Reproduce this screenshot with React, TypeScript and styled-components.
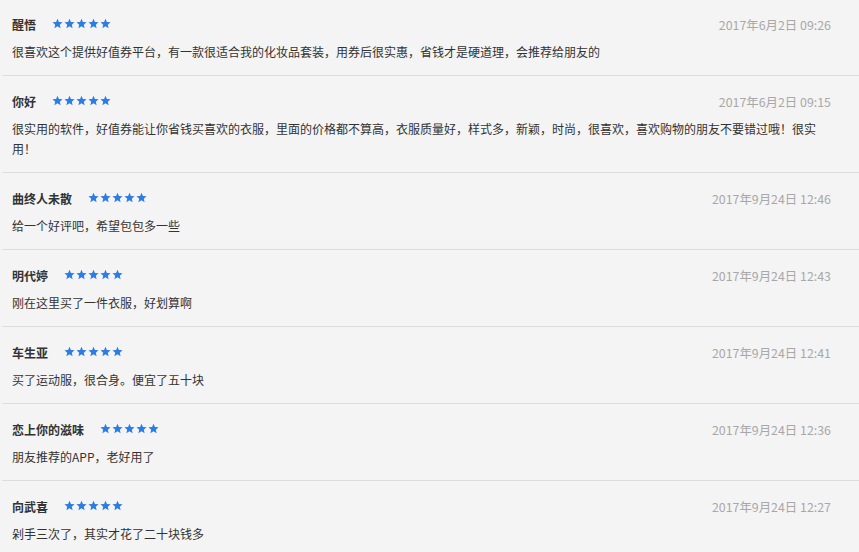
import React from 'react';
import styled, { createGlobalStyle } from 'styled-components';

const GlobalStyle = createGlobalStyle`
  html, body {
    margin: 0;
    padding: 0;
    background: #f4f4f4;
  }
  body {
    font-family: 'Microsoft YaHei', 'Noto Sans CJK SC', 'Noto Sans', sans-serif;
    color: #333;
  }
`;

const List = styled.div`
  margin-top: -1px;
  background: #f4f4f4;
  overflow: hidden;
`;

const Item = styled.div`
  margin-left: 2px;
  padding: 18px 28px 13px 10px;
  border-bottom: 1px solid #dddddd;
`;

const Head = styled.div`
  display: flex;
  align-items: center;
  height: 16px;
  margin-bottom: 9px;
`;

const Name = styled.span`
  font-size: 12px;
  font-weight: bold;
  color: #333;
  line-height: 16px;
`;

const Stars = styled.div`
  display: flex;
  gap: 1px;
  margin-left: 16px;
  margin-top: -4px;
`;

const Date = styled.span`
  margin-left: auto;
  font-size: 12.4px;
  color: #a8a8a8;
  line-height: 16px;
`;

const Content = styled.div`
  font-size: 12px;
  line-height: 20px;
  color: #333;
`;

const Star: React.FC = () => (
  <svg width="11" height="11" viewBox="0 0 24 24">
    <path
      fill="#2b7ce6"
      d="M12 1.5l3.1 7.2 7.9.7-6 5.2 1.8 7.7L12 18.2l-6.8 4.1 1.8-7.7-6-5.2 7.9-.7z"
    />
  </svg>
);

const reviews = [
  { name: '醒悟', date: '2017年6月2日 09:26', text: '很喜欢这个提供好值券平台，有一款很适合我的化妆品套装，用券后很实惠，省钱才是硬道理，会推荐给朋友的' },
  { name: '你好', date: '2017年6月2日 09:15', text: '很实用的软件，好值券能让你省钱买喜欢的衣服，里面的价格都不算高，衣服质量好，样式多，新颖，时尚，很喜欢，喜欢购物的朋友不要错过哦！很实用！' },
  { name: '曲终人未散', date: '2017年9月24日 12:46', text: '给一个好评吧，希望包包多一些' },
  { name: '明代婷', date: '2017年9月24日 12:43', text: '刚在这里买了一件衣服，好划算啊' },
  { name: '车生亚', date: '2017年9月24日 12:41', text: '买了运动服，很合身。便宜了五十块' },
  { name: '恋上你的滋味', date: '2017年9月24日 12:36', text: '朋友推荐的APP，老好用了' },
  { name: '向武喜', date: '2017年9月24日 12:27', text: '剁手三次了，其实才花了二十块钱多' },
];

const App: React.FC = () => (
  <>
    <GlobalStyle />
    <List>
      {reviews.map((r, i) => (
        <Item key={i}>
          <Head>
            <Name>{r.name}</Name>
            <Stars>
              {[0, 1, 2, 3, 4].map(s => <Star key={s} />)}
            </Stars>
            <Date>{r.date}</Date>
          </Head>
          <Content>{r.text}</Content>
        </Item>
      ))}
    </List>
  </>
);

export default App;
